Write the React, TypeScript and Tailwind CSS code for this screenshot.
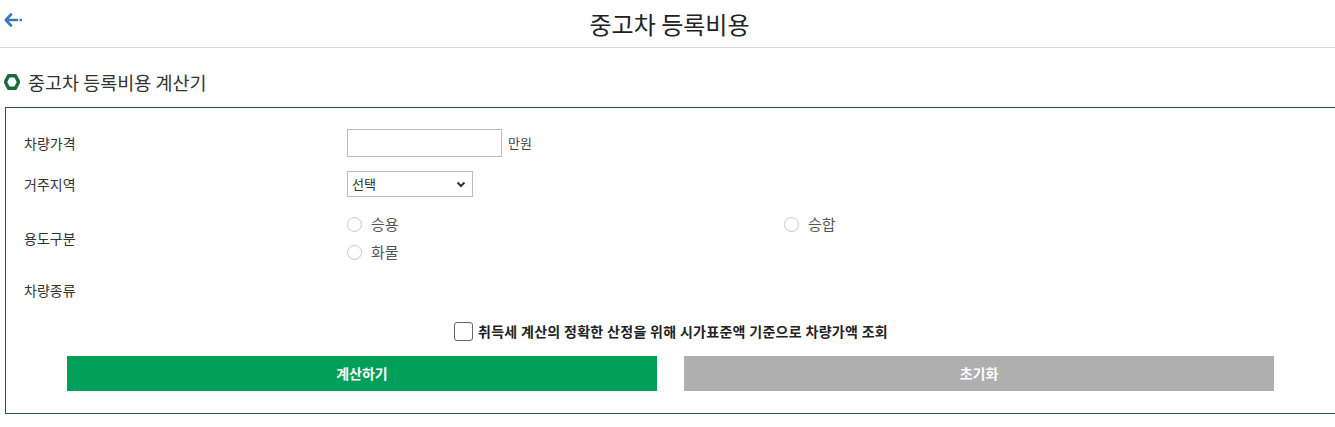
import React from "react";

const KR = { fontFamily: '"Noto Sans CJK KR", "Noto Sans", sans-serif' };

function BackArrow() {
  return (
    <svg width="22" height="16" viewBox="0 0 22 16" fill="none">
      <path d="M7 2.5 L1.8 8 L7 13.5" stroke="#3a78b8" strokeWidth="2.6" strokeLinecap="round" strokeLinejoin="round" />
      <path d="M2.5 8 H13" stroke="#3a78b8" strokeWidth="2.6" strokeLinecap="round" />
      <rect x="15.5" y="6.8" width="2.6" height="2.4" fill="#3a78b8" />
    </svg>
  );
}

function Hexagon() {
  return (
    <svg width="16" height="16" viewBox="0 0 16 16" fill="none">
      <path d="M4.6 1.8 H11.4 L14.6 8 L11.4 14.2 H4.6 L1.4 8 Z" stroke="#1b6b38" strokeWidth="3.4" strokeLinejoin="round" />
    </svg>
  );
}

function Radio({ label }: { label: string }) {
  return (
    <label className="flex h-[27px] items-center gap-[9px]">
      <span className="h-[15px] w-[15px] rounded-full border border-[#c8c8c8] bg-white" />
      <span className="text-[15px] text-[#555]">{label}</span>
    </label>
  );
}

export default function App() {
  return (
    <div className="w-[1335px] overflow-hidden bg-white text-[#333]" style={KR}>
      <header className="relative flex h-[48px] items-center justify-center border-b border-[#dadada]">
        <button className="absolute left-[4px] top-[12px]">
          <BackArrow />
        </button>
        <h1 className="pl-[4px] text-[24px] leading-none text-[#222]">중고차 등록비용</h1>
      </header>

      <div className="flex items-center gap-[8px] pl-[4px] pt-[22px] pb-[13px]">
        <Hexagon />
        <h2 className="text-[18.5px] leading-[24px] text-[#333]">중고차 등록비용 계산기</h2>
      </div>

      <section className="ml-[5px] w-[1332px] border border-[#1f5a4c] pl-[18px] pt-[21px] pb-[22px]">
        <div className="flex h-[28px] items-center">
          <div className="w-[323px] text-[14px]">차량가격</div>
          <input className="h-[28px] w-[155px] border border-[#bbb] px-2 text-[13px] outline-none" />
          <span className="ml-[6px] text-[13px] text-[#444]">만원</span>
        </div>

        <div className="mt-[14px] flex h-[26px] items-center">
          <div className="w-[323px] text-[14px]">거주지역</div>
          <div className="relative flex h-[26px] w-[126px] items-center border border-[#bbb] pl-[4px] text-[13px] text-[#333]">
            선택
            <svg className="absolute right-[6px] top-[9px]" width="10" height="7" viewBox="0 0 10 7" fill="none">
              <path d="M1.5 1.5 L5 5 L8.5 1.5" stroke="#333" strokeWidth="2" />
            </svg>
          </div>
        </div>

        <div className="mt-[14px] flex h-[55px] items-center">
          <div className="w-[323px] text-[14px]">용도구분</div>
          <div className="grid h-full flex-1 grid-cols-[437px_1fr]">
            <Radio label="승용" />
            <Radio label="승합" />
            <Radio label="화물" />
          </div>
        </div>

        <div className="mt-[12px] flex h-[24px] items-center">
          <div className="w-[323px] text-[14px]">차량종류</div>
        </div>

        <div className="mt-[17px] flex h-[24px] items-center justify-center pr-[18px]">
          <span className="mr-[5px] h-[19px] w-[19px] rounded-[3px] border border-[#666] bg-white" />
          <span className="text-[14px] font-bold tracking-[0.3px] text-[#222]">
            취득세 계산의 정확한 산정을 위해 시가표준액 기준으로 차량가액 조회
          </span>
        </div>

        <div className="mt-[13px] flex justify-center gap-[27px] pr-[19px]">
          <button className="h-[35px] w-[590px] bg-[#00a05a] text-[14px] font-bold text-white">계산하기</button>
          <button className="h-[35px] w-[590px] bg-[#afafaf] text-[14px] font-bold text-white">초기화</button>
        </div>
      </section>
    </div>
  );
}
